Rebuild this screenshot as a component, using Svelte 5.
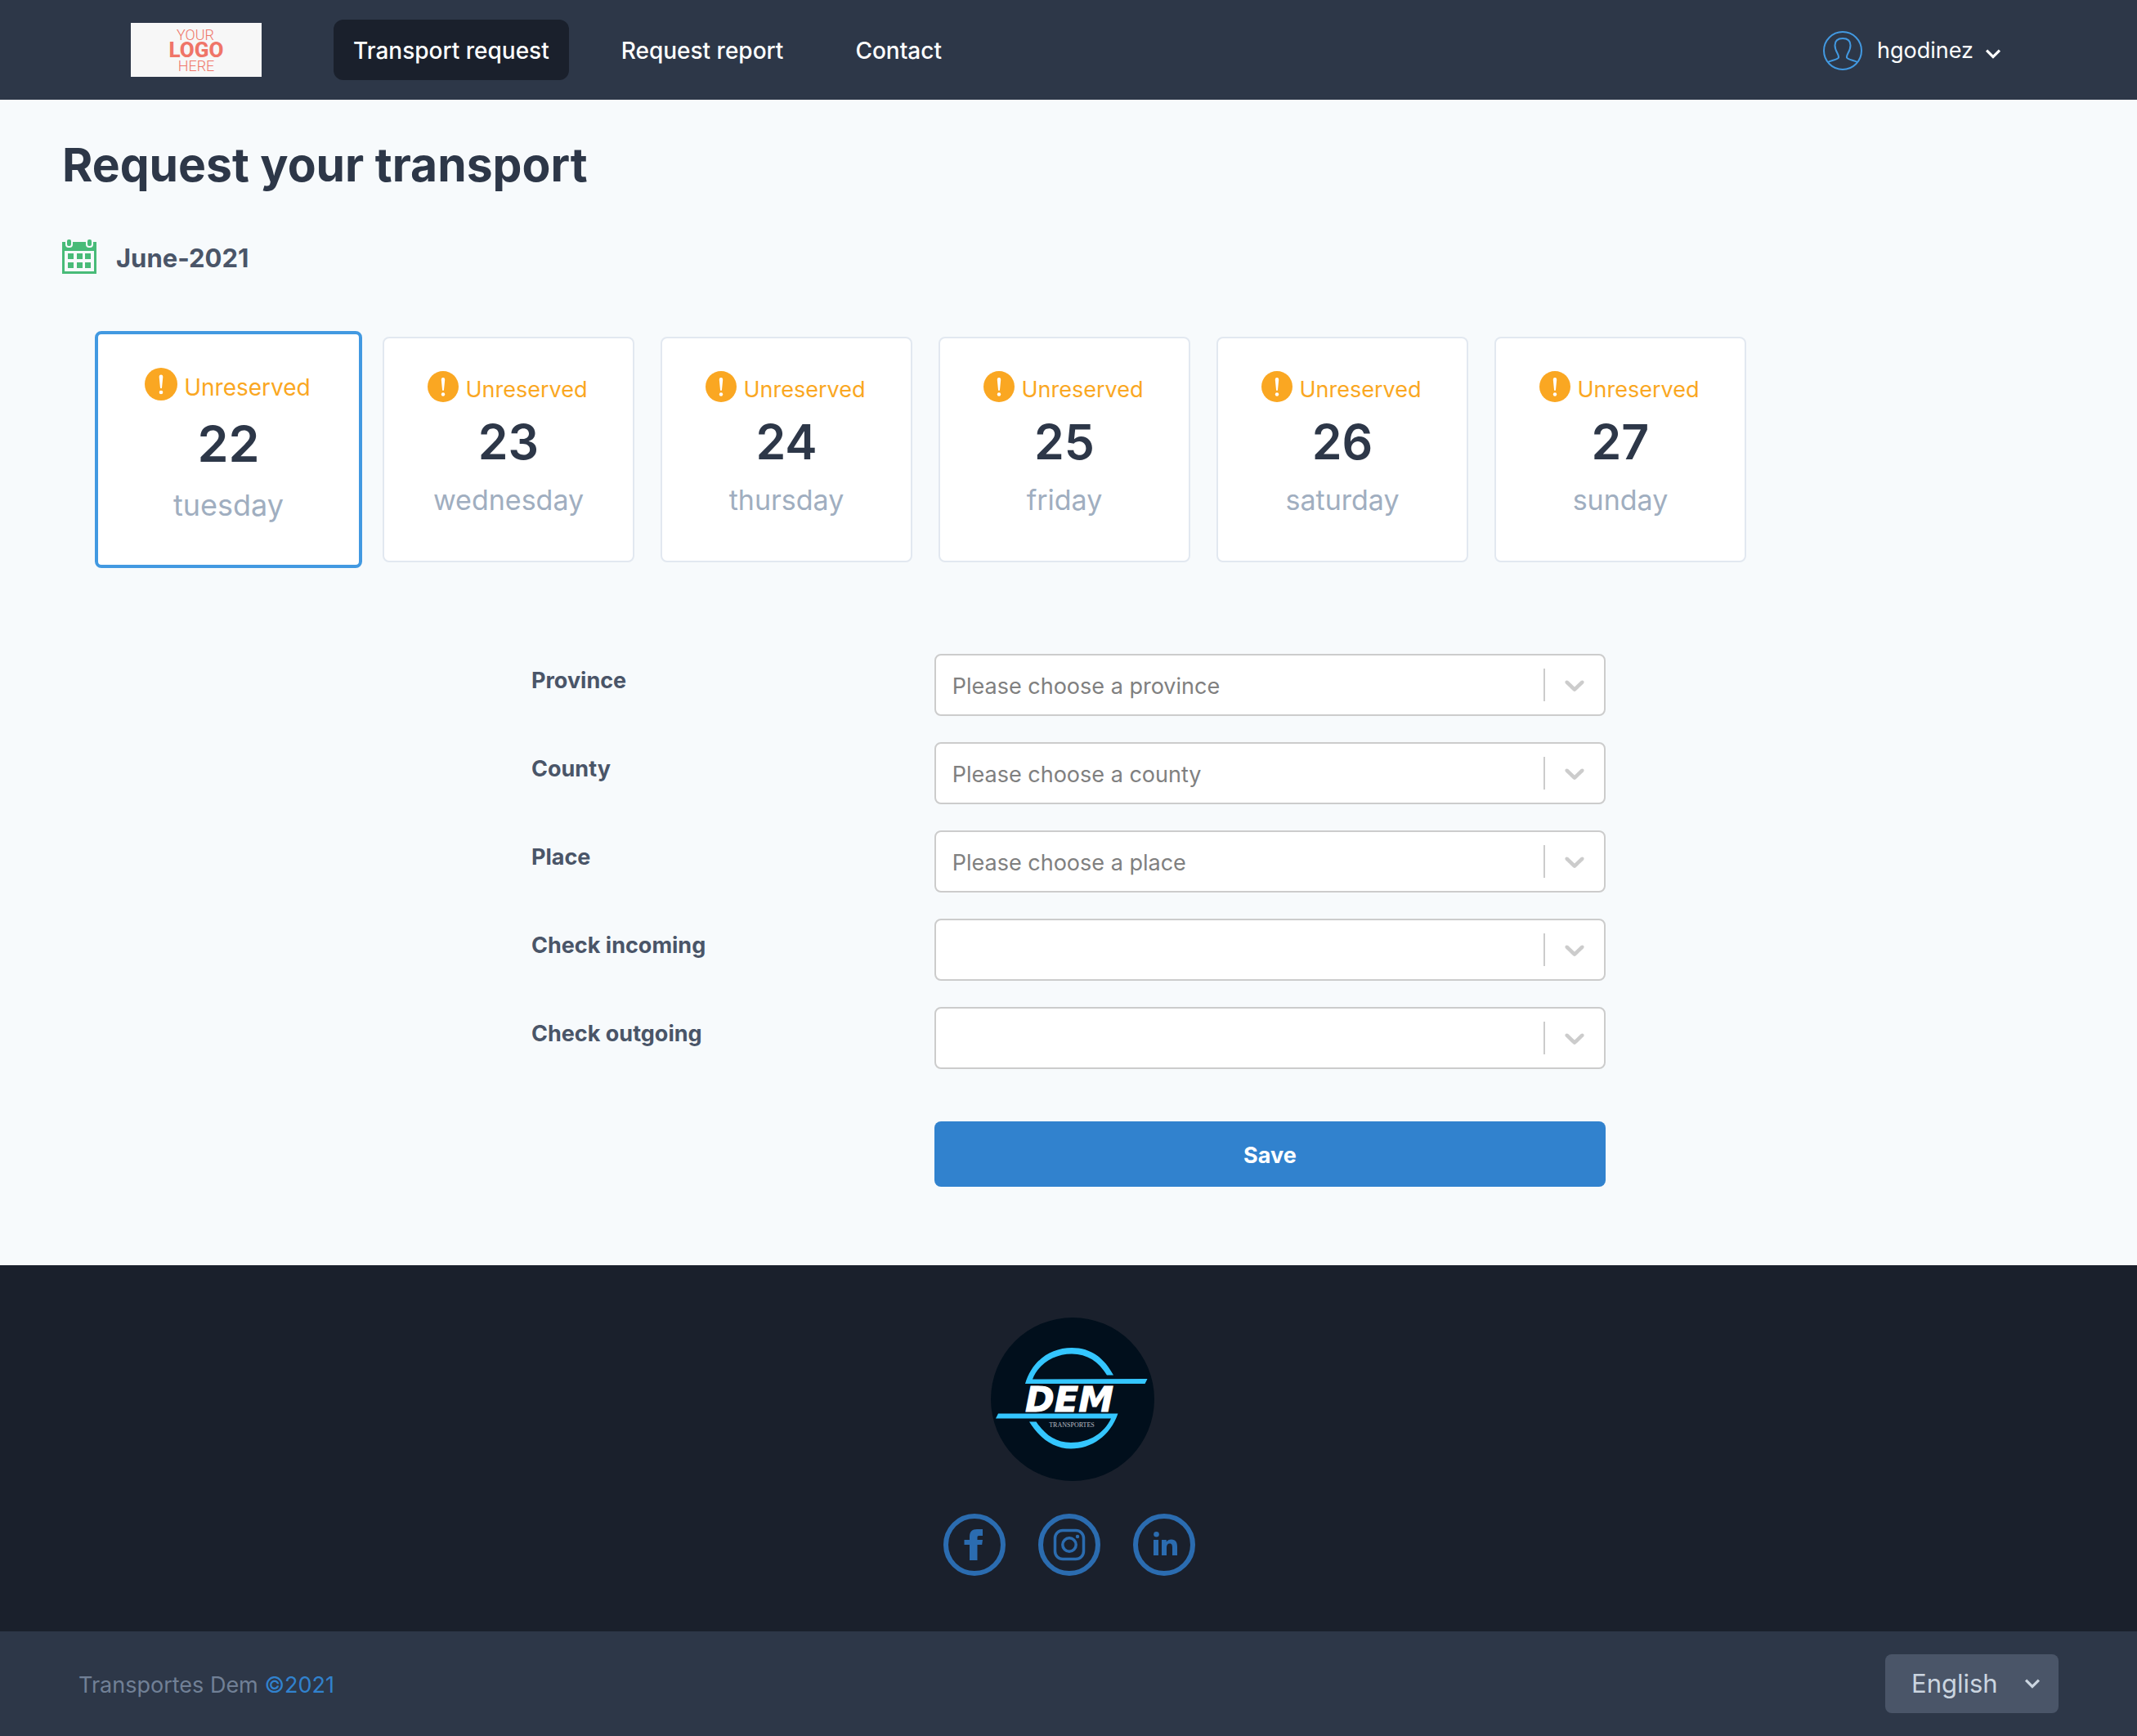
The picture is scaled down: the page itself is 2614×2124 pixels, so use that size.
<script>
  const links = [
    { label: 'Transport request', active: true },
    { label: 'Request report', active: false },
    { label: 'Contact', active: false }
  ];

  const days = [
    { number: 22, name: 'tuesday' },
    { number: 23, name: 'wednesday' },
    { number: 24, name: 'thursday' },
    { number: 25, name: 'friday' },
    { number: 26, name: 'saturday' },
    { number: 27, name: 'sunday' }
  ];

  const fields = [
    { id: 'province', label: 'Province', placeholder: 'Please choose a province' },
    { id: 'county', label: 'County', placeholder: 'Please choose a county' },
    { id: 'place', label: 'Place', placeholder: 'Please choose a place' },
    { id: 'incoming', label: 'Check incoming', placeholder: '' },
    { id: 'outgoing', label: 'Check outgoing', placeholder: '' }
  ];

  let selected = $state(22);
</script>

<div class="page">
  <header class="topbar">
    <a class="brand" href="#home" aria-label="Home">
      <svg viewBox="0 0 160 66" width="160" height="66">
        <rect width="160" height="66" fill="#f7f7f7" />
        <g fill="#ef7568" text-anchor="middle" font-family="Roboto, sans-serif">
          <text x="79" y="21" font-size="18" font-weight="300">YOUR</text>
          <text x="80" y="42" font-size="26" font-weight="800">LOGO</text>
          <text x="80" y="59" font-size="18" font-weight="300">HERE</text>
        </g>
      </svg>
    </a>
    <nav class="nav">
      {#each links as link}
        <a class="nav-link" class:active={link.active} href="#{link.label}">{link.label}</a>
      {/each}
    </nav>
    <button class="user" type="button">
      <svg class="avatar" viewBox="0 0 48 48" fill="none" stroke="#4299e1" stroke-width="2">
        <circle cx="24" cy="24" r="23" />
        <path d="M6 38 C9 36 17 35.500 19 32.500 C20 29 14.500 25 14.500 17.500 C14.500 12 18 9 24 9 C30 9 33.500 12 33.500 17.500 C33.500 25 28 29 29 32.500 C31 35.500 39 36 42 38" />
      </svg>
      <span>hgodinez</span>
      <svg class="caret" viewBox="0 0 20 20" fill="currentColor">
        <path d="M9.293 12.950l.707.707L15.657 8l-1.414-1.414L10 10.828 5.757 6.586 4.343 8z" />
      </svg>
    </button>
  </header>

  <main class="content">
    <h1>Request your transport</h1>
    <div class="month">
      <svg viewBox="0 0 42 42" width="42" height="42">
        <path fill="#48bb78" d="M0 3h42v39H0z" />
        <path fill="#f7fafc" d="M3 14h36v25H3z" />
        <g fill="#48bb78" stroke="#f7fafc" stroke-width="2">
          <rect x="5" y="-1" width="7" height="10" rx="3" />
          <rect x="30" y="-1" width="7" height="10" rx="3" />
        </g>
        <path fill="#48bb78" d="M7 17h7v7H7zM18 17h7v7h-7zM28 17h7v7h-7zM7 28h7v7H7zM18 28h7v7h-7zM28 28h7v7h-7z" />
      </svg>
      <h2>June-2021</h2>
    </div>

    <div class="days">
      {#each days as day}
        <button
          class="day"
          class:selected={selected === day.number}
          type="button"
          onclick={() => (selected = day.number)}
        >
          <span class="status">
            <svg viewBox="0 0 38 38">
              <circle cx="19" cy="19" r="19" fill="#faa722" />
              <path fill="#fff" d="M19 8c1.600 0 2.300 1.200 2.200 2.700l-1.200 12.300c-.1 1.200-1.900 1.200-2 0l-1.200-12.300C16.700 9.200 17.400 8 19 8z" />
              <circle cx="19" cy="28.500" r="2.200" fill="#fff" />
            </svg>
            <span>Unreserved</span>
          </span>
          <span class="number">{day.number}</span>
          <span class="name">{day.name}</span>
        </button>
      {/each}
    </div>

    <form class="form">
      {#each fields as field}
        <label for={field.id}>{field.label}</label>
        <div class="control">
          <select id={field.id}>
            <option>{field.placeholder}</option>
          </select>
          <span class="indicator">
            <svg viewBox="0 0 20 20" width="40" height="40" fill="#cccccc">
              <path d="M4.516 7.548c0.436-0.446 1.043-0.481 1.576 0l3.908 3.747 3.908-3.747c0.533-0.481 1.141-0.446 1.574 0 0.436 0.445 0.408 1.197 0 1.615-0.406 0.418-4.695 4.502-4.695 4.502-0.217 0.223-0.502 0.335-0.787 0.335s-0.570-0.112-0.789-0.335c0 0-4.287-4.084-4.695-4.502s-0.436-1.170 0-1.615z" />
            </svg>
          </span>
        </div>
      {/each}
      <button class="save" type="button">Save</button>
    </form>
  </main>

  <footer>
    <div class="social-area">
      <svg class="dem" viewBox="0 0 200 200" width="200" height="200">
        <circle cx="100" cy="100" r="100" fill="#010f1c" />
        <g fill="#34c6ff">
          <path d="M42 81 C50 53 73 37 99 37 C123 37 139 50 150 70.500 L142 70.500 C132 54 118 44.500 99 44.500 C77 44.500 58 57 51 75.500 L191.500 75 L188.500 81 Z" />
          <path d="M155.500 117.500 C146 145 123 160.500 98 160.500 C76 160.500 59 147 47 127.500 L55.500 127.500 C66 143 79 153 98 153 C121 153 139 141 147 123.500 L6 123.500 L9 117.500 Z" />
        </g>
        <text x="96" y="115" fill="#fff" stroke="#fff" stroke-width="1" font-family="'DejaVu Sans', sans-serif" font-size="43" font-weight="700" font-style="italic" text-anchor="middle">DEM</text>
        <text x="99" y="134" fill="#b9bec4" font-family="'Liberation Serif', serif" font-size="8" text-anchor="middle">TRANSPORTES</text>
      </svg>
      <div class="socials">
        <a href="#facebook" aria-label="Facebook">
          <svg viewBox="0 0 76 76" fill="#2b6cb0">
            <circle cx="38" cy="38" r="35" fill="none" stroke="#2b6cb0" stroke-width="6" />
            <path d="M32 57V38h-6.500v-6H32v-4c0-6 3-9 9-9h7v8h-4.500c-1.500 0-2 .7-2 2v3H48l-.8 6h-5.700v19z" />
          </svg>
        </a>
        <a href="#instagram" aria-label="Instagram">
          <svg viewBox="0 0 76 76" fill="none" stroke="#2b6cb0">
            <circle cx="38" cy="38" r="35" stroke-width="6" />
            <rect x="20.500" y="20.500" width="35" height="35" rx="9.500" stroke-width="3.500" />
            <circle cx="38" cy="38" r="8.200" stroke-width="3.500" />
            <circle cx="48" cy="28" r="2.200" fill="#2b6cb0" stroke="none" />
          </svg>
        </a>
        <a href="#linkedin" aria-label="LinkedIn">
          <svg viewBox="0 0 76 76" fill="#2b6cb0">
            <circle cx="38" cy="38" r="35" fill="none" stroke="#2b6cb0" stroke-width="6" />
            <circle cx="28.500" cy="25.300" r="3.300" />
            <path d="M25 32h6v19h-6zM35 32h5.800v2.600c1.200-2 3.200-3.100 6-3.100 5.500 0 7.200 3.500 7.200 9V51h-6v-9.500c0-2.800-.5-5-3.200-5-2.800 0-3.800 2-3.800 5V51h-6z" />
          </svg>
        </a>
      </div>
    </div>
    <div class="bottom">
      <p>Transportes Dem <a href="#about">©2021</a></p>
      <div class="language">
        <select aria-label="Language">
          <option>English</option>
        </select>
        <svg class="caret" viewBox="0 0 20 20" fill="currentColor">
          <path d="M9.293 12.950l.707.707L15.657 8l-1.414-1.414L10 10.828 5.757 6.586 4.343 8z" />
        </svg>
      </div>
    </div>
  </footer>
</div>

<style>
  :global(body) {
    margin: 0;
  }
  .page {
    min-height: 100vh;
    display: flex;
    flex-direction: column;
    background: #f7fafc;
    color: #4a5568;
    font-family: Inter, 'Liberation Sans', sans-serif;
    font-size: 27px;
    line-height: 42px;
  }
  .page *,
  .page {
    box-sizing: border-box;
  }
  svg {
    display: block;
    flex: none;
  }
  a {
    text-decoration: none;
  }
  button,
  select {
    font: inherit;
    border: 0;
    cursor: pointer;
  }
  h1,
  h2,
  p {
    margin: 0;
  }

  .topbar {
    display: flex;
    align-items: center;
    padding: 24px 160px;
    background: #2d3748;
    color: #fff;
  }
  .nav {
    display: flex;
    gap: 40px;
    margin-left: 88px;
  }
  .nav-link {
    padding: 17px 24px 15px;
    border-radius: 12px;
    color: #fff;
    font-size: 28px;
    font-weight: 500;
  }
  .nav-link.active {
    background: #1a202c;
  }
  .user {
    display: flex;
    align-items: center;
    margin-left: auto;
    padding: 2px 0 0;
    background: none;
    color: #fff;
  }
  .avatar {
    width: 48px;
    height: 48px;
    margin-right: 18px;
  }
  .caret {
    width: 32px;
    height: 32px;
  }
  .user .caret {
    margin: 8px 0 0 8px;
  }

  .content {
    flex: 1;
    padding: 40px 76px 96px;
  }
  h1 {
    color: #2d3748;
    font-size: 57px;
    line-height: 80px;
    font-weight: 700;
  }
  .month {
    display: flex;
    align-items: center;
    gap: 24px;
    margin-top: 48px;
  }
  h2 {
    padding-top: 4px;
    font-size: 31px;
    line-height: 44px;
    font-weight: 700;
  }

  .days {
    display: flex;
    align-items: center;
    gap: 32px;
    margin: 67px 0 105px 40px;
  }
  .day {
    width: 308px;
    height: 276px;
    display: flex;
    flex-direction: column;
    align-items: center;
    padding: 38px 0 0;
    border: 2px solid #e2e8f0;
    border-radius: 8px;
    background: #fff;
  }
  .status {
    display: flex;
    align-items: center;
    gap: 8px;
    padding-right: 2px;
    color: #faa722;
    line-height: 44px;
  }
  .status svg {
    width: 38px;
    height: 38px;
    margin-bottom: 6px;
  }
  .status span {
    padding-top: 3px;
  }
  .number {
    color: #2d3748;
    font-size: 59px;
    line-height: 84px;
    font-weight: 600;
  }
  .name {
    color: #a0aec0;
    font-size: 34px;
    line-height: 58px;
  }
  .day.selected {
    width: 327px;
    height: 290px;
    margin-right: -7px;
    padding-top: 40px;
    border: 4px solid #4299e1;
  }
  .selected .status {
    font-size: 28px;
  }
  .selected .status svg {
    width: 40px;
    height: 40px;
  }
  .selected .number {
    font-size: 61px;
    line-height: 94px;
  }
  .selected .name {
    font-size: 36px;
    line-height: 56px;
  }

  .form {
    display: grid;
    grid-template-columns: 3fr 5fr;
    row-gap: 32px;
    max-width: 1314px;
    margin: 0 auto;
  }
  label {
    padding-top: 12px;
    font-weight: 700;
  }
  .control {
    display: grid;
    align-items: center;
  }
  .control > * {
    grid-area: 1 / 1;
  }
  .control select {
    appearance: none;
    width: 100%;
    height: 76px;
    padding: 4px 84px 0 20px;
    border: 2px solid #cccccc;
    border-radius: 8px;
    background: #fff;
    color: #808080;
  }
  .indicator {
    justify-self: end;
    display: flex;
    margin-right: 18px;
    padding-left: 16px;
    border-left: 2px solid #cccccc;
    pointer-events: none;
  }
  .save {
    grid-column: 2;
    height: 80px;
    margin-top: 32px;
    padding: 4px 0 0;
    border-radius: 8px;
    background: #3182ce;
    color: #fff;
    font-weight: 700;
  }

  .social-area {
    display: flex;
    flex-direction: column;
    align-items: center;
    gap: 40px;
    padding: 64px 0 68px;
    background: #1a202c;
  }
  .dem {
    margin-left: 10px;
  }
  .socials {
    display: flex;
    gap: 40px;
    padding-left: 2px;
  }
  .socials svg {
    width: 76px;
    height: 76px;
  }
  .bottom {
    display: flex;
    align-items: center;
    justify-content: space-between;
    padding: 28px 96px;
    background: #2d3748;
    color: #718096;
  }
  .bottom p {
    padding-top: 4px;
  }
  .bottom a {
    color: #3182ce;
  }
  .language {
    display: grid;
    align-items: center;
    color: #cbd5e0;
  }
  .language > * {
    grid-area: 1 / 1;
  }
  .language select {
    appearance: none;
    width: 212px;
    height: 72px;
    padding: 0 64px 0 32px;
    border-radius: 8px;
    background: #4a5568;
    color: #cbd5e0;
    font-size: 31px;
  }
  .language .caret {
    justify-self: end;
    margin-right: 16px;
    pointer-events: none;
  }
</style>
